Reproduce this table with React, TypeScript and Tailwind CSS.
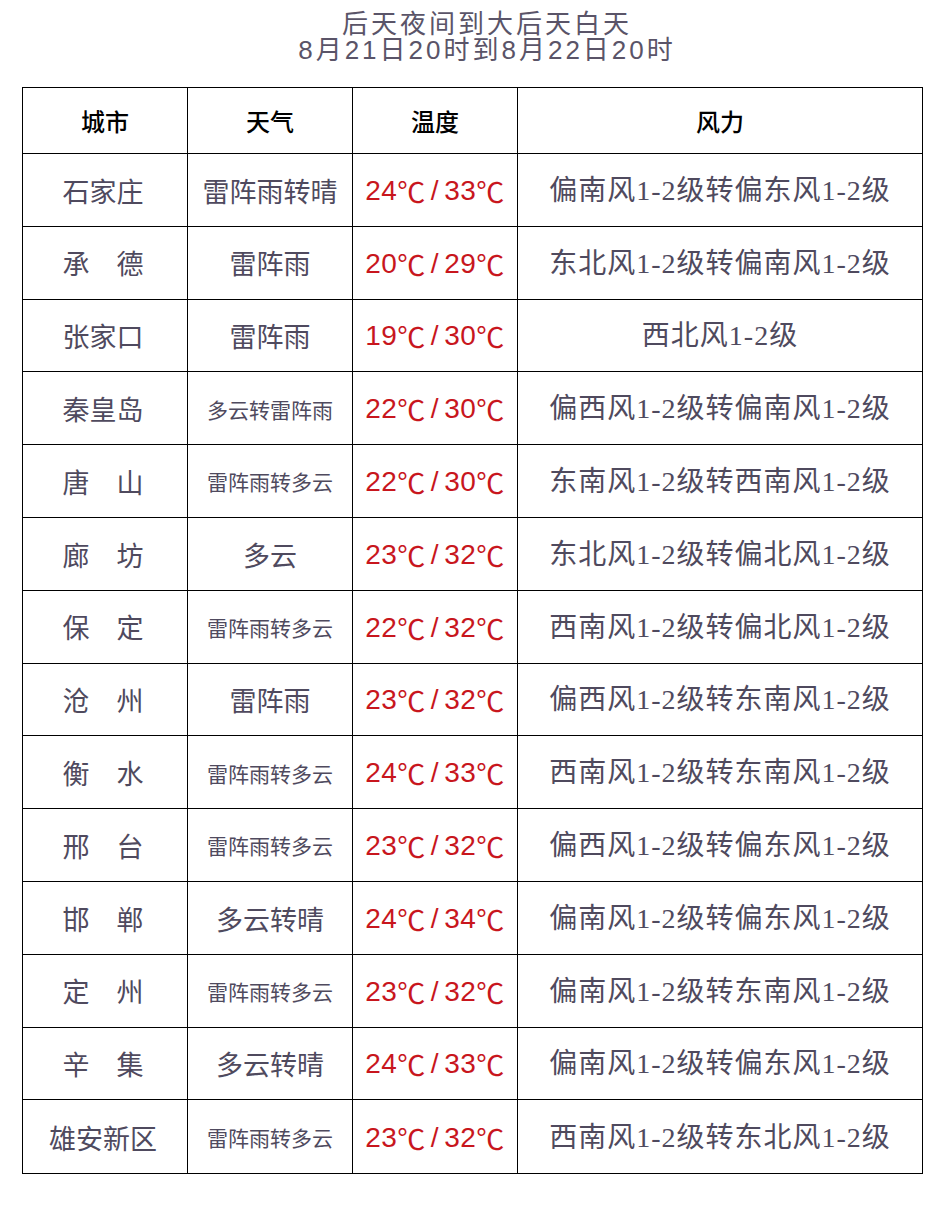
const rows: [string, string, boolean, string, string][] = [
  ['石家庄', '雷阵雨转晴', false, '24/33', '偏南风1-2级转偏东风1-2级'],
  ['承　德', '雷阵雨', false, '20/29', '东北风1-2级转偏南风1-2级'],
  ['张家口', '雷阵雨', false, '19/30', '西北风1-2级'],
  ['秦皇岛', '多云转雷阵雨', true, '22/30', '偏西风1-2级转偏南风1-2级'],
  ['唐　山', '雷阵雨转多云', true, '22/30', '东南风1-2级转西南风1-2级'],
  ['廊　坊', '多云', false, '23/32', '东北风1-2级转偏北风1-2级'],
  ['保　定', '雷阵雨转多云', true, '22/32', '西南风1-2级转偏北风1-2级'],
  ['沧　州', '雷阵雨', false, '23/32', '偏西风1-2级转东南风1-2级'],
  ['衡　水', '雷阵雨转多云', true, '24/33', '西南风1-2级转东南风1-2级'],
  ['邢　台', '雷阵雨转多云', true, '23/32', '偏西风1-2级转偏东风1-2级'],
  ['邯　郸', '多云转晴', false, '24/34', '偏南风1-2级转偏东风1-2级'],
  ['定　州', '雷阵雨转多云', true, '23/32', '偏南风1-2级转东南风1-2级'],
  ['辛　集', '多云转晴', false, '24/33', '偏南风1-2级转偏东风1-2级'],
  ['雄安新区', '雷阵雨转多云', true, '23/32', '西南风1-2级转东北风1-2级'],
];

const cjk = { fontFamily: '"Noto Sans CJK SC", sans-serif' };
const sans = { fontFamily: '"Liberation Sans", "Noto Sans CJK SC", sans-serif' };
const wind = { fontFamily: '"Liberation Serif", "Noto Sans CJK SC", serif' };

function Temp({ value }: { value: string }) {
  const [lo, hi] = value.split('/');
  return (
    <span className="flex items-center tracking-[0.5px]" style={sans}>
      <span>{lo}</span>
      <span style={cjk}>℃</span>
      <span className="mx-[5px]">/</span>
      <span>{hi}</span>
      <span style={cjk}>℃</span>
    </span>
  );
}

export default function App() {
  return (
    <div className="w-[942px] h-[1218px] bg-white text-[#4f4a5e]" style={cjk}>
      <div className="flex flex-col items-center pt-[8px] pl-[32px] h-[87px] text-[#5a5468]">
        <div className="text-[26px] leading-[28px] tracking-[3px]">后天夜间到大后天白天</div>
        <div className="text-[26px] leading-[28px] tracking-[3px]" style={sans}>
          8月21日20时到8月22日20时
        </div>
      </div>

      <div className="ml-[22px] w-[901px] border border-black">
        <div className="flex h-[66px] border-b border-black text-black text-[24px] font-medium">
          <div className="w-[165px] flex items-center justify-center border-r border-black">城市</div>
          <div className="w-[165px] flex items-center justify-center border-r border-black">天气</div>
          <div className="w-[165px] flex items-center justify-center border-r border-black">温度</div>
          <div className="flex-1 flex items-center justify-center">风力</div>
        </div>
        {rows.map(([city, weather, small, t, w], i) => (
          <div
            key={city}
            className={`flex h-[72.8px] ${i < rows.length - 1 ? 'border-b border-black' : ''}`}
          >
            <div className="w-[165px] flex items-center justify-center border-r border-black text-[27px] pt-[2px] pr-[4px]">
              {city}
            </div>
            <div
              className={`w-[165px] flex items-center justify-center border-r border-black pt-[2px] ${
                small ? 'text-[21px]' : 'text-[27px]'
              }`}
            >
              {weather}
            </div>
            <div className="w-[165px] flex items-center justify-center border-r border-black text-[28px] text-[#c8161d] pt-[2px]">
              <Temp value={t} />
            </div>
            <div
              className="flex-1 flex items-center justify-center text-[28px] tracking-[1px] pt-[2px]"
              style={wind}
            >
              {w}
            </div>
          </div>
        ))}
      </div>
    </div>
  );
}
